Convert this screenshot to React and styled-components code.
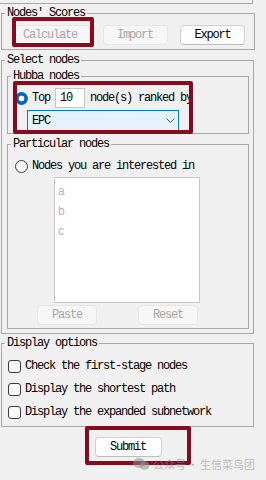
import React from "react";
import styled, { createGlobalStyle } from "styled-components";

const Global = createGlobalStyle`
  html, body { margin: 0; padding: 0; background: #f0f0f0; }
  body { font-family: "Liberation Mono", monospace; }
`;

const Page = styled.div`
  position: relative;
  width: 266px;
  height: 480px;
  overflow: hidden;
  background: #f0f0f0;
  font-family: "Liberation Mono", monospace;
  font-size: 12px;
  letter-spacing: -1.2px;
  line-height: 12px;
  color: #000;
  display: flex;
  flex-direction: column;
`;

const TopStub = styled.div`
  width: 253px;
  height: 4px;
  box-sizing: border-box;
  border-right: 1px solid #a8a8a8;
  border-bottom: 1px solid #a8a8a8;
`;

const Group = styled.fieldset`
  box-sizing: border-box;
  margin: ${(p) => p.$mt || 0}px 0 0 ${(p) => p.$ml || 0}px;
  width: ${(p) => p.$w}px;
  padding: 0;
  border: 1px solid #a8a8a8;
  min-inline-size: 0;
`;

const Legend = styled.legend`
  margin-left: 3px;
  padding: 0 2px;
  height: 13px;
  line-height: 13px;
`;

const GroupBody = styled.div`
  display: flex;
  flex-direction: column;
  gap: ${(p) => p.$gap || 0}px;
  padding: ${(p) => p.$pad};
`;

const ButtonRow = styled.div`
  display: flex;
  justify-content: space-between;
  padding: 5px 9px 4px 8px;
`;

const Button = styled.div`
  box-sizing: border-box;
  width: ${(p) => p.$w}px;
  height: ${(p) => p.$h || 20}px;
  margin-left: ${(p) => p.$ml || 0}px;
  display: flex;
  align-items: center;
  justify-content: center;
  border-radius: 4px;
  border: 1px solid ${(p) => (p.$disabled ? "#e6e6e6" : "#d0d0d0")};
  border-bottom-color: ${(p) => (p.$disabled ? "#e6e6e6" : "#bcbcbc")};
  background: ${(p) => (p.$disabled ? "#f6f6f6" : "#fdfdfd")};
  color: ${(p) => (p.$disabled ? "#a6a6a6" : "#000")};
`;

const Row = styled.div`
  display: flex;
  align-items: center;
  gap: ${(p) => p.$gap || 4}px;
  height: ${(p) => p.$h || 16}px;
  padding-left: ${(p) => p.$pl || 0}px;
`;

const Radio = styled.span`
  flex: none;
  width: 13px;
  height: 13px;
  border-radius: 50%;
  box-sizing: border-box;
  background: ${(p) =>
    p.$checked
      ? "radial-gradient(circle, #fff 0 2.6px, #0067c0 3.2px)"
      : "#f7f7f7"};
  border: ${(p) => (p.$checked ? "none" : "1px solid #3c3c3c")};
`;

const Check = styled.span`
  flex: none;
  width: 13px;
  height: 13px;
  box-sizing: border-box;
  border-radius: 3px;
  border: 1px solid #3c3c3c;
  background: #f8f8f8;
`;

const NumInput = styled.div`
  box-sizing: border-box;
  width: 30px;
  height: 20px;
  margin: 0 1px;
  border: 1px solid #c4c4c4;
  background: #fff;
  display: flex;
  align-items: center;
  padding-left: 4px;
`;

const Combo = styled.div`
  box-sizing: border-box;
  width: 152px;
  height: 21px;
  margin-left: 19px;
  border: 1px solid #0078d4;
  background: #e5f1fb;
  display: flex;
  align-items: center;
  justify-content: space-between;
  padding: 0 3px 0 4px;
`;

const TextArea = styled.div`
  box-sizing: border-box;
  width: 146px;
  height: 126px;
  margin: 3px 0 0 46px;
  border: 1px solid #c8c8c8;
  background: #fff;
  padding: 3px 0 0 3px;
  font-family: "Liberation Sans", Arial, sans-serif;
  font-size: 12px;
  letter-spacing: 0;
  line-height: 20px;
  color: #b4b4b4;
`;

const PairRow = styled.div`
  display: flex;
  margin-top: 2px;
  padding-left: 29px;
`;

const CheckList = styled.div`
  display: flex;
  flex-direction: column;
  gap: 3px;
  padding: 6px 0 4px 6px;
`;

const SubmitRow = styled.div`
  display: flex;
  justify-content: center;
  width: 254px;
  margin: 10px 0 0 1px;
`;

const Mark = styled.div`
  position: absolute;
  left: ${(p) => p.$x}px;
  top: ${(p) => p.$y}px;
  width: ${(p) => p.$w}px;
  height: ${(p) => p.$h}px;
  box-sizing: border-box;
  border: 4px solid #870b1e;
  border-radius: 2px;
  pointer-events: none;
`;

const Watermark = styled.div`
  position: absolute;
  left: 133px;
  top: 457px;
  height: 14px;
  display: flex;
  align-items: center;
  font-family: "Noto Sans CJK SC", sans-serif;
  font-size: 11px;
  letter-spacing: 0;
  color: rgba(140, 140, 140, 0.55);
`;

const Dot = styled.span`
  width: 14px;
  text-align: center;
`;

const Chevron = () => (
  <svg width="9" height="5" viewBox="0 0 9 5">
    <path d="M0.5 0.5 L4.5 4.5 L8.5 0.5" fill="none" stroke="#555" strokeWidth="1" />
  </svg>
);

const WeChat = () => (
  <svg width="17" height="12" viewBox="0 0 17 12" style={{ marginRight: 3 }}>
    <ellipse cx="6" cy="5" rx="6" ry="5" fill="rgba(140,140,140,0.55)" />
    <ellipse cx="11.5" cy="7.5" rx="5" ry="4.2" fill="rgba(150,150,150,0.6)" />
  </svg>
);

export default function App() {
  return (
    <>
      <Global />
      <Page>
        <TopStub />
        <Group $mt={3} $ml={1} $w={254}>
          <Legend>Nodes' Scores</Legend>
          <ButtonRow>
            <Button $w={80} $disabled>Calculate</Button>
            <Button $w={65} $disabled>Import</Button>
            <Button $w={65}>Export</Button>
          </ButtonRow>
        </Group>

        <Group $mt={4} $ml={1} $w={253}>
          <Legend>Select nodes</Legend>
          <GroupBody $pad="3px 4px 4px 5px" $gap={4}>
            <Group $w={242}>
              <Legend>Hubba nodes</Legend>
              <GroupBody $pad="5px 0 2px 0" $gap={2}>
                <Row $h={20} $pl={7}>
                  <Radio $checked />
                  <span>Top</span>
                  <NumInput>10</NumInput>
                  <span>node(s) ranked by</span>
                </Row>
                <Combo>
                  <span>EPC</span>
                  <Chevron />
                </Combo>
              </GroupBody>
            </Group>

            <Group $w={242}>
              <Legend>Particular nodes</Legend>
              <GroupBody $pad="7px 0 3px 0">
                <Row $h={16} $pl={7}>
                  <Radio />
                  <span>Nodes you are interested in</span>
                </Row>
                <TextArea>
                  <div>a</div>
                  <div>b</div>
                  <div>c</div>
                </TextArea>
                <PairRow>
                  <Button $w={60} $disabled>Paste</Button>
                  <Button $w={60} $ml={41} $disabled>Reset</Button>
                </PairRow>
              </GroupBody>
            </Group>
          </GroupBody>
        </Group>

        <Group $mt={3} $ml={1} $w={253}>
          <Legend>Display options</Legend>
          <CheckList>
            <Row $h={20}>
              <Check />
              <span>Check the first-stage nodes</span>
            </Row>
            <Row $h={20}>
              <Check />
              <span>Display the shortest path</span>
            </Row>
            <Row $h={20}>
              <Check />
              <span>Display the expanded subnetwork</span>
            </Row>
          </CheckList>
        </Group>

        <SubmitRow>
          <Button $w={67}>Submit</Button>
        </SubmitRow>

        <Mark $x={12} $y={17} $w={82} $h={30} />
        <Mark $x={13} $y={81} $w={180} $h={53} />
        <Mark $x={85} $y={426} $w={106} $h={39} />

        <Watermark>
          <WeChat />
          <span>公众号</span>
          <Dot>·</Dot>
          <span>生信菜鸟团</span>
        </Watermark>
      </Page>
    </>
  );
}
